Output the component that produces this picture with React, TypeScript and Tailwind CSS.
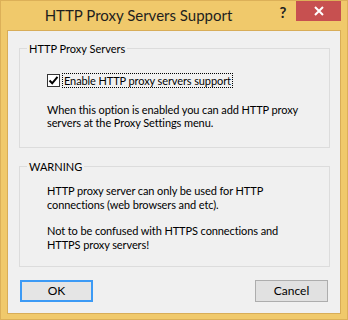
import React, { useState } from "react"

const font = { fontFamily: 'Lato, "Noto Sans", Arial, sans-serif' }

const HelpCloseButtons = () => (
  <div className="flex items-start">
    <div className="w-[26px] h-[20px] flex items-center justify-center text-[15px] font-bold text-[#222] leading-none pt-[3px]">
      ?
    </div>
    <div className="w-[45px] h-[20px] bg-[#c75050] flex items-center justify-center">
      <svg width="10" height="10" viewBox="0 0 10 10">
        <path d="M1 1 L9 9 M9 1 L1 9" stroke="#fff" strokeWidth="2" />
      </svg>
    </div>
  </div>
)

const GroupBox: React.FC<{ title: string; className?: string; children: React.ReactNode }> = ({
  title,
  className,
  children,
}) => (
  <fieldset className={`border border-[#dcdcdc] ml-[11px] mr-[10px] px-0 ${className ?? ""}`}>
    <legend className="ml-[7px] px-[2px] text-[11px] leading-[13px] whitespace-nowrap">{title}</legend>
    {children}
  </fieldset>
)

export default function App() {
  const [enabled, setEnabled] = useState(true)

  return (
    <div
      className="w-[348px] h-[320px] bg-[#f0c96b] border border-[#dcb058] flex flex-col text-black"
      style={font}
    >
      {/* title bar */}
      <div className="h-[29px] flex items-start">
        <div className="flex-1 h-[29px] flex items-center justify-center pl-[6px] text-[15px] text-[#1e1e1e] whitespace-nowrap">
          HTTP Proxy Servers Support
        </div>
        <HelpCloseButtons />
        <div className="w-[6px]" />
      </div>

      {/* client area */}
      <div className="mx-[6px] h-[284px] border border-[#d8ad58] bg-[#f0f0f0] flex flex-col">
        <GroupBox title="HTTP Proxy Servers" className="mt-[11px] h-[106px]">
          <div className="pl-[27px] pt-[18px] whitespace-nowrap text-[11px] tracking-[-0.1px]">
            <label className="flex items-center h-[15px]">
              <span
                onClick={() => setEnabled(!enabled)}
                className="w-[13px] h-[13px] border border-[#333] bg-white flex items-center justify-center"
              >
                {enabled && (
                  <svg width="11" height="11" viewBox="0 0 11 11">
                    <path d="M1.5 5.5 L4.2 8.3 L9.5 1.8" stroke="#000" strokeWidth="2" fill="none" />
                  </svg>
                )}
              </span>
              <span className="ml-[2px] h-[15px] border border-dotted border-black px-[1px] leading-[13px]">
                Enable HTTP proxy servers support
              </span>
            </label>
            <p className="mt-[15px] leading-[13px]">
              When this option is enabled you can add HTTP proxy
              <br />
              servers at the Proxy Settings menu.
            </p>
          </div>
        </GroupBox>

        <GroupBox title="WARNING" className="mt-[12px] h-[107px]">
          <div className="pl-[27px] pt-[11px] text-[11px] tracking-[-0.1px] leading-[13.5px] whitespace-nowrap">
            <p>
              HTTP proxy server can only be used for HTTP
              <br />
              connections (web browsers and etc).
            </p>
            <p className="mt-[13px]">
              Not to be confused with HTTPS connections and
              <br />
              HTTPS proxy servers!
            </p>
          </div>
        </GroupBox>

        <div className="flex justify-between ml-[12px] mr-[12px] mt-[13px]">
          <button className="w-[73px] h-[22px] border-2 border-[#3c9af5] bg-[#e5e5e5] text-[12px] leading-none">
            OK
          </button>
          <button className="w-[73px] h-[22px] border border-[#adadad] bg-[#e1e1e1] text-[12px] leading-none">
            Cancel
          </button>
        </div>
      </div>
    </div>
  )
}
